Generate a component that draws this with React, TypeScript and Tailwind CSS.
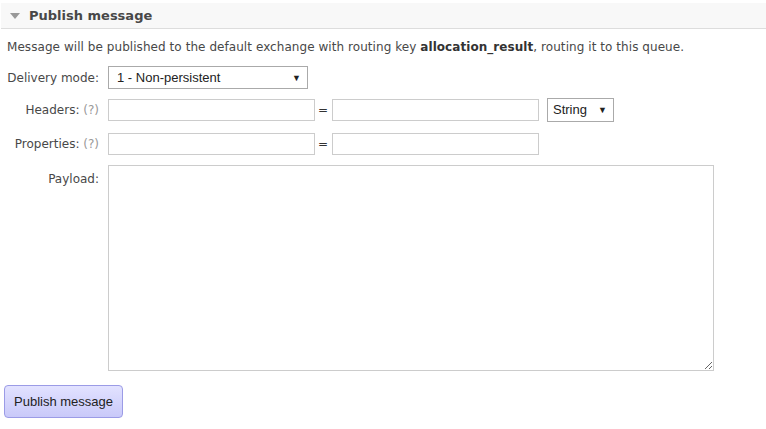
import React from 'react';

const verdana = "font-['Verdana','DejaVu_Sans',sans-serif]";
const arial = "font-['Arial','Liberation_Sans',sans-serif]";

const Label: React.FC<{ text: string; help?: boolean; top?: boolean }> = ({ text, help, top }) => (
  <div className={`w-[100px] shrink-0 text-right pr-[1px] ${top ? 'pt-[5px]' : ''}`}>
    {text}
    {help && <span className="text-[#999]"> (?)</span>}
  </div>
);

const Select: React.FC<{ value: string; className: string }> = ({ value, className }) => (
  <div
    className={`relative flex items-center border border-[#aaa] bg-white text-[13px] text-[#222] ${arial} ${className}`}
  >
    <span className="pl-[5px]">{value}</span>
    <span className="absolute right-[6px] top-[5px] text-[9px]">▼</span>
  </div>
);

const TextInput: React.FC<{ className?: string }> = ({ className = '' }) => (
  <input className={`h-[22px] w-[207px] shrink-0 border border-[#ccc] bg-white outline-none ${className}`} />
);

const KeyValue: React.FC = () => (
  <>
    <TextInput />
    <span className="ml-[2px] w-[12px] text-center text-[#333]">=</span>
    <TextInput className="ml-[3px]" />
  </>
);

export default function App() {
  return (
    <div className={`w-[766px] h-[429px] bg-white text-[12px] text-[#484848] ${verdana}`}>
      <div className="pt-[3px]">
        <div className="flex items-center h-[26px] ml-[1px] bg-[#f8f8f8] border-b border-[#ddd]">
          <svg width="10" height="6" viewBox="0 0 10 6" className="ml-[9px] mt-[1px]">
            <path d="M0 0 L10 0 L5 6 Z" fill="#999" />
          </svg>
          <span className="ml-[9px] font-bold text-[13px] text-[#484848]">Publish message</span>
        </div>
      </div>

      <p className="ml-[7px] mt-[10px] leading-[16px] tracking-[0.06px]">
        Message will be published to the default exchange with routing key{' '}
        <b className="text-[#333]">allocation_result</b>, routing it to this queue.
      </p>

      <div className="mt-[11px] flex items-center">
        <Label text="Delivery mode:" />
        <Select value="1 - Non-persistent" className="ml-[8px] w-[200px] h-[23px] pl-[3px]" />
      </div>

      <div className="mt-[9px] flex items-center">
        <Label text="Headers:" help />
        <div className="ml-[8px] flex items-center">
          <KeyValue />
          <Select value="String" className="ml-[8px] w-[67px] h-[24px]" />
        </div>
      </div>

      <div className="mt-[11px] flex items-center">
        <Label text="Properties:" help />
        <div className="ml-[8px] flex items-center">
          <KeyValue />
        </div>
      </div>

      <div className="mt-[10px] flex items-start">
        <Label text="Payload:" top />
        <textarea className="ml-[8px] w-[606px] h-[206px] border border-[#ccc] bg-white outline-none" />
      </div>

      <button
        className={`ml-[4px] mt-[14px] w-[119px] h-[33px] rounded-[4px] border border-[#9b9be6] bg-gradient-to-b from-[#e2e2ff] to-[#c9c9f9] text-[13px] text-[#222] ${arial}`}
      >
        Publish message
      </button>
    </div>
  );
}
